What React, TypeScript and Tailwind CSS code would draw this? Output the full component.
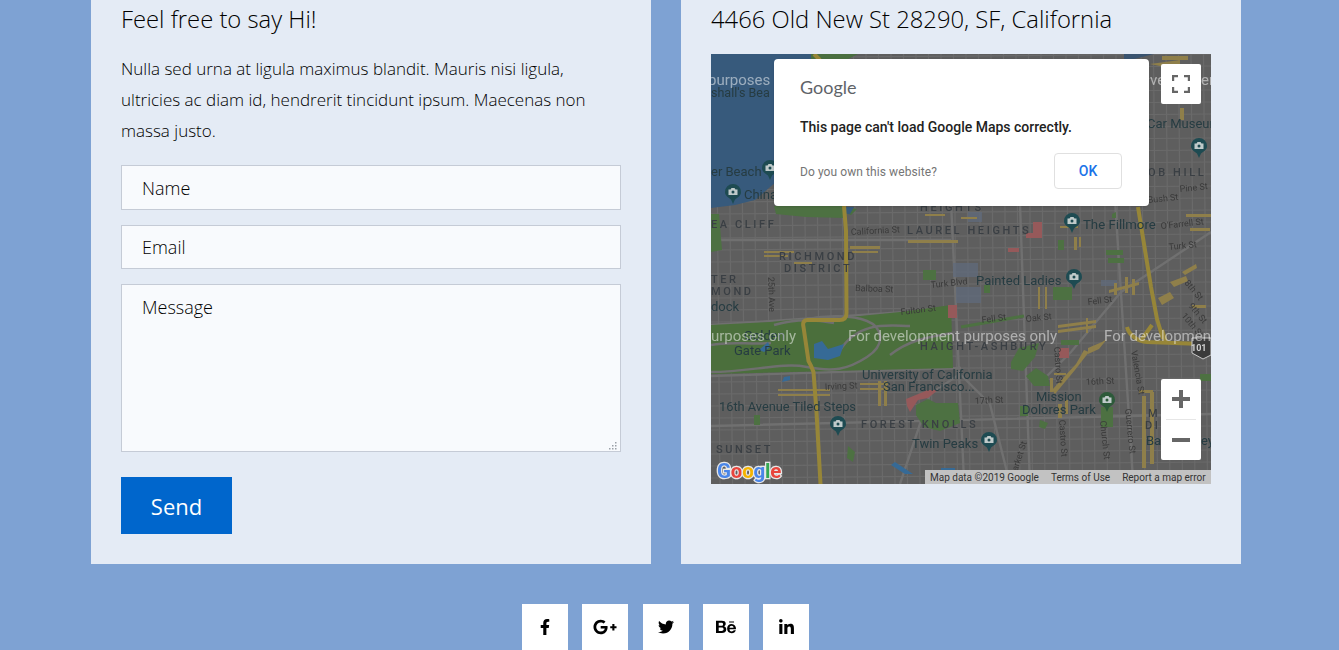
import React from "react";
import { FaFacebookF, FaGooglePlusG, FaTwitter, FaBehance, FaLinkedinIn } from "react-icons/fa";

const range = (a: number, b: number, s: number) => {
  const o: number[] = [];
  for (let i = a; i <= b; i += s) o.push(i);
  return o;
};

type L = [string, number, number, number?, number?];

const poi: L[] = [
  ["shall's Bea", 711, 97, 12.5],
  ["er Beach", 711, 176, 13],
  ["China", 744, 199, 13],
  ["The Fillmore", 1083, 229, 13.2],
  ["Car Museum", 1147, 128, 13],
  ["Painted Ladies", 976, 285, 13],
  ["dock", 711, 311, 13],
  ["Golden", 744, 340, 13],
  ["Gate Park", 734, 355, 13],
  ["University of California", 862, 379, 13],
  ["San Francisco...", 883, 391, 13],
  ["16th Avenue Tiled Steps", 719, 411, 12.8],
  ["Twin Peaks", 912, 448, 13],
  ["Mission", 1036, 401, 13],
  ["Dolores Park", 1022, 414, 13],
  ["Ba", 1146, 445, 13],
  ["ey", 1201, 445, 13],
];

const area: L[] = [
  ["EA CLIFF", 711, 228, 11],
  ["RICHMOND", 779, 260, 11],
  ["DISTRICT", 784, 272, 11],
  ["TER", 711, 283, 11],
  ["MOND", 711, 295, 11],
  ["HEIGHTS", 920, 211, 11],
  ["LAUREL HEIGHTS", 907, 234, 11],
  ["OB HILL", 1148, 176, 11],
  ["HAIGHT-ASHBURY", 920, 350, 11],
  ["FOREST KNOLLS", 861, 428, 11],
  ["SUNSET", 716, 453, 11],
  ["M", 1148, 417, 11],
  ["DI", 1145, 429, 11],
];

const street: L[] = [
  ["California St", 851, 235, 9, -3],
  ["O'Farrell St", 1161, 229, 9, -6],
  ["Turk St", 1169, 250, 9, -6],
  ["Pine St", 1180, 192, 9, -6],
  ["Bush St", 1148, 203, 9, -6],
  ["Turk Blvd", 931, 288, 9, -6],
  ["Balboa St", 855, 291, 9, 2],
  ["25th Ave", 768, 277, 9, 88],
  ["Fulton St", 901, 315, 9, -7],
  ["Fell St", 982, 323, 9, -7],
  ["Oak St", 1026, 322, 9, -6],
  ["Fell St", 1088, 305, 9, -7],
  ["Castro St", 1054, 347, 9, 86],
  ["Valencia St", 1131, 351, 9, 80],
  ["Castro St", 1059, 420, 9, 86],
  ["Guerrero St", 1125, 409, 9, 84],
  ["Church St", 1100, 421, 9, 84],
  ["Market St", 1015, 479, 9, -72],
  ["Irving St", 825, 390, 9, -3],
  ["17th St", 975, 404, 9, -3],
  ["16th St", 1086, 385, 9, -3],
  ["8th St", 1184, 283, 9, 50],
  ["9th St", 1188, 306, 9, 50],
  ["10th St", 1181, 316, 9, 50],
];

const yellow = [
  "M764 251h30v2h-30zM764 255h24v2h-24zM794 262h18v2h-18zM850 246h30v3h-30zM852 251h26v2h-26zM908 240h50v3h-50zM925 214h20v2h-20z",
  "M961 217h16v2h-16zM1060 226h18v2h-18zM1074 237h3v13h-3zM1079 237h2v10h-2zM1038 287h2v22h-2zM1045 287h2v22h-2z",
  "M1058 325l38-5v3l-38 5zM1058 330l38-5v3l-38 5zM1086 318h2v15h-2zM1109 290l30-8v3l-30 8zM1114 283h3v12h-3zM1125 277h3v16h-3zM1132 279h3v16h-3z",
  "M1158 298l12-6 4 6-12 7zM1170 282l16-6 2 5-14 6zM1192 305h14v3h-14zM1182 272l14-8 1 4-12 7z",
  "M1052 390l24-26 8-14 5 2-14 18-20 24zM1088 348l14-6 5-3-8 10-11 5zM1139 390h14v3h-14zM1142 396h4v72h-4zM1150 392h4v72h-4z",
  "M1058 404h4v14h-4zM1065 400h3v14h-3zM1050 378h3v14h-3zM1054 373h12v2h-12z",
  "M778 389h52v2h-52zM778 394h52v2h-52zM860 383h28v2h-28zM860 388h28v2h-28zM878 381h3v25h-3zM884 381h3v25h-3z",
  "M1150 64l30-4v6h-20zM1162 56h26v4h-26zM1180 108h4v12h-4zM1186 214h25v3h-25zM1190 228h20v3h-20z",
];

const greens = [
  "M711 214l8 0 3 36-11 2zM774 206h70l2 12-40-1-30-3z",
  "M923 270h13v10h-13zM984 285h6v8h-6zM1053 287h19v13h-19zM1058 240h6v10h-6zM1106 250h17v5h-17zM1108 258h16v5h-16z",
  "M1011 362l8-14 20-5-4 14-12 14-12-2zM1026 376l10-8 12 8 2 10-16 0zM1061 340h18v5h-18z",
  "M1101 407h12v20h-12zM916 405l12-6 8 4 22 0 2 20-20 8-16-4-8-12z",
  "M1112 214l4-2v6h-4zM1020 406h8v10h-8zM1200 374h11v7h-11z",
  "M754 415h6v10h-6zM848 446l7 6-2 10-6-4zM1040 420l8 3-3 6-6-2z",
];

const pins: [number, number, string?][] = [
  [770, 168],
  [733, 192],
  [1072, 221],
  [1199, 146],
  [1074, 277],
  [838, 424],
  [989, 440],
  [1107, 400, "#2d5a3a"],
];

function Pin({ x, y, c = "#1e4b52" }: { x: number; y: number; c?: string }) {
  return (
    <g transform={`translate(${x} ${y})`}>
      <path d="M-8 0a8 8 0 1 1 16 0c0 4-3.500 5.500-6 7.500L0 12l-2-4.500C-4.500 5.500-8 4-8 0z" fill={c} />
      <path d="M-4.500 -2.500h2l1-1.500h3l1 1.500h2v5.500h-9z" fill="#bfcaca" />
      <circle cx="0" cy="0" r="1.500" fill={c} />
    </g>
  );
}

function MapDrawing() {
  const lab = "Roboto, sans-serif";
  return (
    <svg viewBox="711 54 500 430" className="block h-[430px] w-[500px] blur-[0.3px]">
      <rect x="711" y="54" width="500" height="430" fill="#5e5e5e" />
      <g stroke="#6a6a6a" strokeWidth="1.200">
        {range(716, 1211, 12.500).map((x) => (
          <line key={x} x1={x} y1="54" x2={x + 4} y2="484" />
        ))}
        {range(58, 484, 12).map((y) => (
          <line key={y} x1="711" y1={y} x2="1211" y2={y - 4} />
        ))}
      </g>
      <g stroke="#707070" strokeWidth="2.400" fill="none">
        <path d="M711 376l250-8M711 426l500-12M711 240l240 0M950 180l14 300M1020 205l10 280M1115 200l18 280M1211 232l-90 60-50 60-30 30M900 484l30-90 30-20 30 30 20 80M711 325l240-16" />
      </g>
      <path d="M711 54h100l10 8-20 100-25 20-21 18-20 5-24 3h-20z" fill="#375a7c" />
      <path d="M811 54h47l-10 5H811zM845 207l12 2-6 6-6-2z" fill="#4a6f40" />
      <path d="M840 207h14l-4 7-10-1z" fill="#375a7c" />
      <path d="M1124 54h30l-20 5h-10z" fill="#3a5470" />
      <path d="M711 325l59-3 20-2 50-2 60-6 30-4 21-3 2 63-242 6z" fill="#4b6f3c" />
      {greens.map((d) => (
        <path key={d} d={d} fill="#4d7142" />
      ))}
      <path d="M961 327l63-11" stroke="#4d7142" strokeWidth="3" fill="none" />
      <path d="M948 305h9v13h-9zM1059 348h10v10h-10zM1033 222h9v16h-9zM1026 233h7v5h-7zM1008 248h11v4h-11zM906 399l22-9 10 0-10 8-10 2-8 12-3-6z" fill="#96595a" />
      <path d="M953 263h25v14h-25zM956 287h25v16h-25zM968 212h14v10h-14zM1101 280h16v6h-16z" fill="#5f6b7d" opacity="0.7" />
      <g fill="none" stroke="#6f6f6f" strokeWidth="2.500">
        <path d="M711 372c40 0 70-10 96-5s40 3 60-10 15-30 0-36-40-6-60-2M774 325c20-6 40-6 60-2M840 350c20-30 50-24 70-24M890 355c20-16 40-18 62-22M711 345c20-4 40 0 60-2" />
      </g>
      <path d="M814 344l8-3 6 8 16-5-4 12-12 4-14-2z" fill="#366a96" />
      <path d="M790 380l-8 2 2-5 6-1zM759 350l9-8 2 5-6 5z" fill="#366a96" />
      <path d="M895 462l18 12h-8l-14-9zM941 468h14v6h-14z" fill="#366a96" />
      {yellow.map((d) => (
        <path key={d} d={d} fill="#8f7f4a" />
      ))}
      <g fill="none" stroke="#978638" strokeWidth="4" strokeLinejoin="round">
        <path d="M844 206l2 25 .5 82c0 5-3 7-7 7h-32c-4 0-5 3-4 7l5 34c3 5 4 8 5 11l3 40 4 72" />
        <path d="M814 54l6 6M1138 207l13 80 6 32 6 20M1127 327c2 8 10 14 20 15l55 2M1152 325l-10 14M1162 330l4 12" />
      </g>
      <path d="M1192 338h19v17l-8 4-11-6z" fill="#3b3b3b" stroke="#c9c9c9" strokeWidth="1" />
      <text x="1191" y="351" fontFamily={lab} fontSize="9" fontWeight="700" fill="#d0d0d0">101</text>
      <g fontFamily={lab}>
        {street.map(([t, x, y, s, r]) => (
          <text key={t + x} x={x} y={y} fontSize={s} fill="#3a3a3a" transform={`rotate(${r ?? 0} ${x} ${y})`}>
            {t}
          </text>
        ))}
        {area.map(([t, x, y, s]) => (
          <text key={t + x} x={x} y={y} fontSize={s} fontWeight="500" letterSpacing="2.600" fill="#3a3f44">
            {t}
          </text>
        ))}
        {poi.map(([t, x, y, s]) => (
          <text key={t + x} x={x} y={y} fontSize={s} fill="#263c42">
            {t}
          </text>
        ))}
        {pins.map(([x, y, c]) => (
          <Pin key={x} x={x} y={y} c={c} />
        ))}
        <g fontSize="15" fill="#ffffff" fillOpacity="0.5">
          <text x="708" y="85">purposes</text>
          <text x="1150" y="85">ve</text>
          <text x="1201" y="85">en</text>
          <text x="711" y="341">urposes only</text>
          <text x="848" y="341">For development purposes only</text>
          <text x="1104" y="341">For development</text>
        </g>
        <text x="717" y="478" fontSize="20.500" fontWeight="700" stroke="#e8e8e8" strokeWidth="2.500" paintOrder="stroke" letterSpacing="-0.200">
          <tspan fill="#4a86e8">G</tspan>
          <tspan fill="#e8453c">o</tspan>
          <tspan fill="#f4b400">o</tspan>
          <tspan fill="#4a86e8">g</tspan>
          <tspan fill="#34a853">l</tspan>
          <tspan fill="#e8453c">e</tspan>
        </text>
      </g>
    </svg>
  );
}

const fieldCls =
  "block w-full border border-[#c5cbd6] bg-[#f8fafd] px-5 text-[18px] font-light text-black outline-none placeholder:text-black placeholder:opacity-100 [font-family:'Open_Sans',sans-serif]";

export default function App() {
  return (
    <div className="h-[650px] w-full overflow-hidden bg-[#7ea2d3] pl-[91px] [font-family:'Open_Sans',sans-serif]">
      <div className="w-[1150px]">
        <div className="flex gap-[30px]">
          <section className="h-[564px] w-[560px] bg-[#e4ebf5] px-[30px]">
            <h2 className="h-[53px] pt-[2px] text-[23.800px] leading-[34px] font-light text-black">Feel free to say Hi!</h2>
            <p className="text-[17px] leading-[31px] font-light text-black">
              Nulla sed urna at ligula maximus blandit. Mauris nisi ligula, ultricies ac diam id, hendrerit tincidunt ipsum. Maecenas non massa justo.
            </p>
            <form className="mt-[19px]">
              <input placeholder="Name" className={`${fieldCls} h-[45px]`} />
              <input placeholder="Email" className={`${fieldCls} mt-[15px] h-[44px]`} />
              <div className="relative mt-[15px]">
                <textarea placeholder="Message" className={`${fieldCls} h-[168px] resize-none py-[9px]`} />
                <svg width="8" height="8" viewBox="0 0 8 8" fill="#9aa0a8" className="absolute right-[4px] bottom-[2px]">
                  <path d="M6 0h1.500v1.500H6zM3 3h1.500v1.500H3zM6 3h1.500v1.500H6zM0 6h1.500v1.500H0zM3 6h1.500v1.500H3zM6 6h1.500v1.500H6z" />
                </svg>
              </div>
              <button type="button" className="mt-[25px] h-[57px] w-[111px] bg-[#0066cc] pt-[2px] text-[22px] font-normal text-white">
                Send
              </button>
            </form>
          </section>
          <section className="h-[564px] w-[560px] bg-[#e4ebf5] px-[30px]">
            <h2 className="h-[54px] pt-[2px] text-[23.800px] leading-[34px] font-light text-black">4466 Old New St 28290, SF, California</h2>
            <div className="relative h-[430px] w-[500px] overflow-hidden">
              <MapDrawing />
              <div className="absolute top-[5px] left-[63px] h-[147px] w-[375px] rounded-[4px] bg-white pt-[18px] pr-[27px] pl-[26px] shadow-sm [font-family:Roboto,sans-serif]">
                <div className="text-[18px] leading-[20px] text-[#5f6368] [font-family:Lato,sans-serif]">Google</div>
                <div className="mt-[20px] text-[14px] leading-[20px] font-medium text-[#222222]">This page can't load Google Maps correctly.</div>
                <div className="mt-[16px] flex items-center justify-between">
                  <span className="pt-[2px] text-[12px] tracking-[0.08px] text-[#757575]">Do you own this website?</span>
                  <button type="button" className="h-[36px] w-[68px] rounded-[4px] border border-[#e0e0e0] text-[14px] font-medium text-[#1a73e8]">
                    OK
                  </button>
                </div>
              </div>
              <div className="absolute top-[10px] right-[10px] flex h-[40px] w-[40px] items-center justify-center rounded-[2px] bg-white">
                <svg width="18" height="18" viewBox="0 0 18 18" fill="none" stroke="#666666" strokeWidth="2.400">
                  <path d="M1 6V1h5M12 1h5v5M17 12v5h-5M6 17H1v-5" />
                </svg>
              </div>
              <div className="absolute top-[325px] right-[10px] h-[81px] w-[40px] rounded-[2px] bg-white">
                <div className="flex h-[40px] items-center justify-center">
                  <svg width="18" height="18" viewBox="0 0 18 18" fill="#666666">
                    <path d="M7 0h4v7h7v4h-7v7H7v-7H0V7h7z" />
                  </svg>
                </div>
                <div className="mx-[5px] h-px bg-[#e6e6e6]" />
                <div className="flex h-[40px] items-center justify-center">
                  <svg width="18" height="18" viewBox="0 0 18 18" fill="#666666">
                    <path d="M0 7h18v4H0z" />
                  </svg>
                </div>
              </div>
              <div className="absolute right-0 bottom-0 flex h-[14px] w-[286px] items-center gap-[12px] bg-[#c2c2c2] pt-[2px] pl-[5px] text-[10px] leading-[12px] whitespace-nowrap text-[#333333] [font-family:Roboto,sans-serif]">
                <span>Map data ©2019 Google</span>
                <span>Terms of Use</span>
                <span>Report a map error</span>
              </div>
            </div>
          </section>
        </div>
        <div className="mt-[40px] flex justify-center gap-[14.250px] pr-px">
          <a className="flex h-[46px] w-[46px] items-center justify-center bg-white text-[16px] text-black">
            <FaFacebookF />
          </a>
          <a className="flex h-[46px] w-[46px] items-center justify-center bg-white text-[24px] text-black">
            <FaGooglePlusG />
          </a>
          <a className="flex h-[46px] w-[46px] items-center justify-center bg-white text-[16px] text-black">
            <FaTwitter />
          </a>
          <a className="flex h-[46px] w-[46px] items-center justify-center bg-white text-[20px] text-black">
            <FaBehance />
          </a>
          <a className="flex h-[46px] w-[46px] items-center justify-center bg-white text-[17px] text-black">
            <FaLinkedinIn />
          </a>
        </div>
      </div>
    </div>
  );
}
